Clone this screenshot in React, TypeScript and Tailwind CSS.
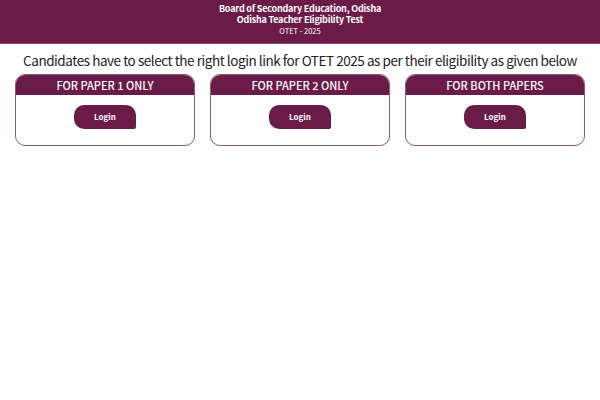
import React from "react";

const papers = ["FOR PAPER 1 ONLY", "FOR PAPER 2 ONLY", "FOR BOTH PAPERS"];

export default function App() {
  return (
    <div
      className="w-[600px] h-[400px] bg-white"
      style={{ fontFamily: '"Noto Sans CJK KR", "Noto Sans", sans-serif' }}
    >
      <header className="h-[44px] bg-[#6a1b48] border-b border-[#8c4a72] flex flex-col items-center pt-[3px] text-white">
        <div className="text-[9px] font-semibold leading-[11px] tracking-[-0.2px]">Board of Secondary Education, Odisha</div>
        <div className="text-[9px] font-semibold leading-[11px] tracking-[-0.2px]">Odisha Teacher Eligibility Test</div>
        <div className="text-[7.5px] leading-[11px]">OTET - 2025</div>
      </header>
      <p className="text-center text-[13.5px] text-[#222] mt-[6px] leading-[20px] whitespace-nowrap tracking-[-0.45px]">
        Candidates have to select the right login link for OTET 2025 as per their eligibility as given below
      </p>
      <div className="flex gap-[15px] px-[15px] mt-[4px]">
        {papers.map((p) => (
          <div
            key={p}
            className="w-[180px] h-[72px] border border-[#8a5878] rounded-[10px] overflow-hidden flex flex-col"
          >
            <div className="h-[20px] bg-[#6a1b48] text-white text-[11px] font-medium flex items-center justify-center">
              {p}
            </div>
            <div className="flex-1 flex justify-center pt-[10px]">
              <button className="w-[62px] h-[24px] bg-[#6a1b48] text-white text-[8px] font-semibold rounded-t-[10px] rounded-bl-[10px] rounded-br-[2px]">
                Login
              </button>
            </div>
          </div>
        ))}
      </div>
    </div>
  );
}
